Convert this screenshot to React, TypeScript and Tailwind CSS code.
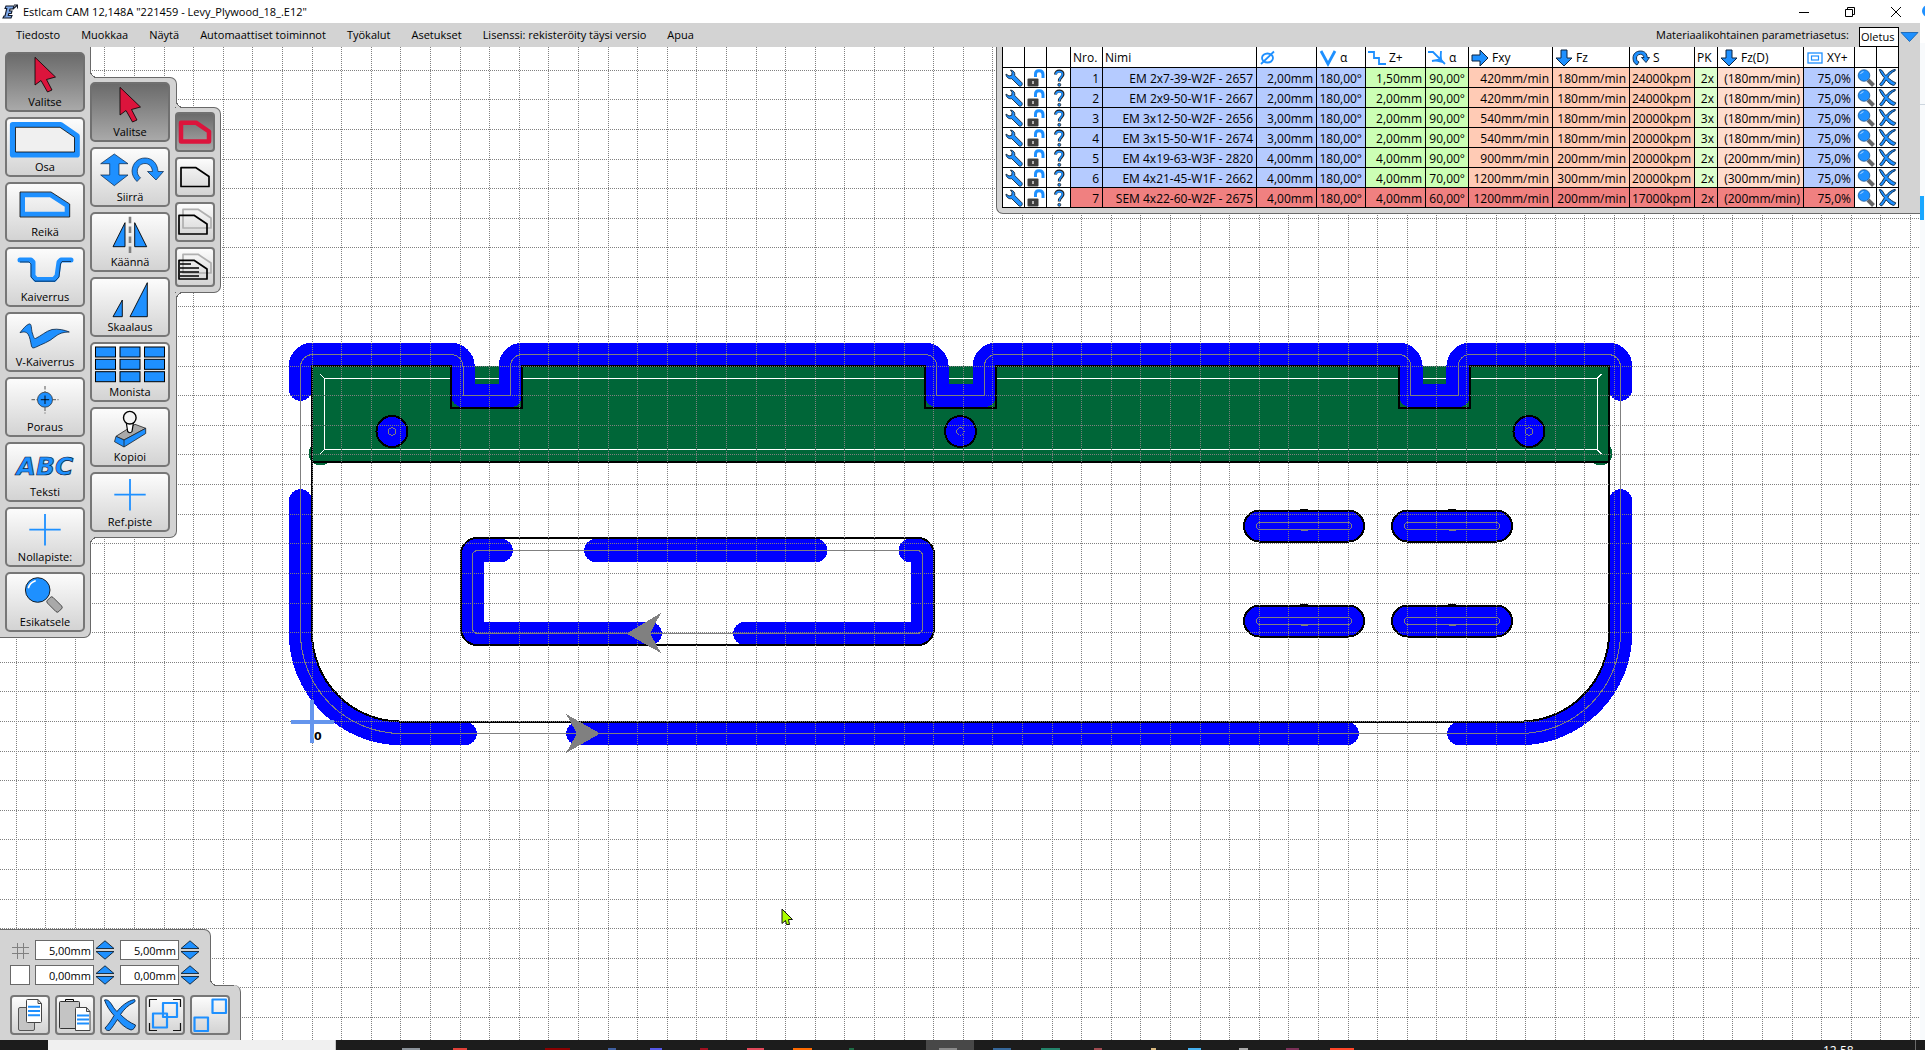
import { useState, type ReactNode } from "react";

const BLUE = "#1e90ff";
const RED = "#dc143c";

// world origin of the drawing and grid pitch (5 mm), in page pixels
const ORIGIN_X = 312;
const ORIGIN_Y = 721.4;
const PITCH = 29.6;
const HEADER = 47;

const menuItems = [
  "Tiedosto",
  "Muokkaa",
  "Näytä",
  "Automaattiset toiminnot",
  "Työkalut",
  "Asetukset",
  "Lisenssi: rekisteröity täysi versio",
  "Apua",
];

type Tool = {
  nro: number;
  nimi: string;
  d: string;
  angle: string;
  z: string;
  plunge: string;
  fxy: string;
  fz: string;
  s: string;
  pk: string;
  fzd: string;
  xy: string;
};

const tools: Tool[] = [
  { nro: 1, nimi: "EM 2x7-39-W2F - 2657", d: "2,00mm", angle: "180,00°", z: "1,50mm", plunge: "90,00°", fxy: "420mm/min", fz: "180mm/min", s: "24000kpm", pk: "2x", fzd: "(180mm/min)", xy: "75,0%" },
  { nro: 2, nimi: "EM 2x9-50-W1F - 2667", d: "2,00mm", angle: "180,00°", z: "2,00mm", plunge: "90,00°", fxy: "420mm/min", fz: "180mm/min", s: "24000kpm", pk: "2x", fzd: "(180mm/min)", xy: "75,0%" },
  { nro: 3, nimi: "EM 3x12-50-W2F - 2656", d: "3,00mm", angle: "180,00°", z: "2,00mm", plunge: "90,00°", fxy: "540mm/min", fz: "180mm/min", s: "20000kpm", pk: "3x", fzd: "(180mm/min)", xy: "75,0%" },
  { nro: 4, nimi: "EM 3x15-50-W1F - 2674", d: "3,00mm", angle: "180,00°", z: "2,00mm", plunge: "90,00°", fxy: "540mm/min", fz: "180mm/min", s: "20000kpm", pk: "3x", fzd: "(180mm/min)", xy: "75,0%" },
  { nro: 5, nimi: "EM 4x19-63-W3F - 2820", d: "4,00mm", angle: "180,00°", z: "4,00mm", plunge: "90,00°", fxy: "900mm/min", fz: "200mm/min", s: "20000kpm", pk: "2x", fzd: "(200mm/min)", xy: "75,0%" },
  { nro: 6, nimi: "EM 4x21-45-W1F - 2662", d: "4,00mm", angle: "180,00°", z: "4,00mm", plunge: "70,00°", fxy: "1200mm/min", fz: "300mm/min", s: "20000kpm", pk: "2x", fzd: "(300mm/min)", xy: "75,0%" },
  { nro: 7, nimi: "SEM 4x22-60-W2F - 2675", d: "4,00mm", angle: "180,00°", z: "4,00mm", plunge: "60,00°", fxy: "1200mm/min", fz: "200mm/min", s: "17000kpm", pk: "2x", fzd: "(200mm/min)", xy: "75,0%" },
];

/* ---------- toolbar icons (76 x 41) ---------- */

const PointerIcon = () => (
  <path d="M28 3.3V31L34 26.5L40.5 38L45 36L39.5 25.5L48.5 23Z" fill={RED} stroke="#000" strokeWidth="0.8" />
);

const PlusIcon = () => (
  <path d="M38 5V36.5M22.3 20.7H53.7" stroke={BLUE} strokeWidth="1.8" fill="none" />
);

const OsaIcon = () => (
  <>
    <path d="M5.7 5.7H53.7L70 17V35.7H5.7Z" fill="none" stroke={BLUE} strokeWidth="5.6" strokeLinejoin="round" />
    <path d="M8.5 8.3H53L67.5 18.3V33H8.5Z" fill="#f0f0f0" stroke="#000" strokeWidth="0.8" />
  </>
);

const ReikaIcon = () => (
  <>
    <path d="M15.5 10.7H43.5L60.2 21.5V30.3H15.5Z" fill="none" stroke={BLUE} strokeWidth="5" />
    <path d="M13 8H44L62.7 20V33H13Z" fill="none" stroke="#000" strokeWidth="0.8" />
  </>
);

const KaiverrusIcon = () => (
  <>
    <path d="M13 11H24L26 13V27L29 30.5H47L50 27L52 13L54 11H64" fill="none" stroke={BLUE} strokeWidth="5" strokeLinecap="round" strokeLinejoin="round" />
    <path d="M13 13H22L24 15V28L28 32.2H48L52 28L53.5 15L55 12.5H64" fill="none" stroke="#0a2340" strokeWidth="0.8" />
  </>
);

const VKaiverrusIcon = () => (
  <path d="M13 18.7C16 15 19 11 22 10C25 9 24 15 25.3 19C26.500 22.500 27 25 28.500 24.500C34 22 39 17 45 15.500C51 14.500 58 16 62.300 18C56 18 52 19.500 48 22.700C42 28 35 30 28.500 33.300C26 34.500 25 34 24.500 32C23.500 28 23 23 21 20C19 17.500 16 17.700 13 18.700Z" fill={BLUE} stroke="#0a2340" strokeWidth="0.8" />
);

const PorausIcon = () => (
  <>
    <circle cx="38" cy="20.700" r="7.500" fill={BLUE} stroke="#333" strokeWidth="0.8" />
    <path d="M38 16.500V25M33.800 20.700H42.200" stroke="#000" strokeWidth="0.9" />
    <path d="M38 7V13M38 28.500V34.500M24.500 20.700H30.500M45.500 20.700H51.500" stroke="#444" strokeWidth="0.9" strokeDasharray="3.500 1.500" />
  </>
);

const TekstiIcon = () => (
  <text x="38" y="31" textAnchor="middle" fontFamily="DejaVu Sans, sans-serif" fontSize="25" fontWeight="bold" fontStyle="italic" fill={BLUE} stroke="#0a2340" strokeWidth="0.7">
    ABC
  </text>
);

const EsikatseleIcon = () => (
  <>
    <rect x="39.500" y="26.500" width="16" height="8" rx="2" transform="rotate(45 47.500 30.500)" fill="#a9a9a9" stroke="#333" strokeWidth="0.8" />
    <circle cx="30.700" cy="16" r="12.300" fill={BLUE} stroke="#111" strokeWidth="0.9" />
    <path d="M21.500 13.500C22.500 10 25 8 28 7" fill="none" stroke="#fff" strokeWidth="1.800" strokeLinecap="round" />
  </>
);

const SiirraIcon = () => (
  <>
    <path d="M22.300 5L36 14.700H27V26H36L22.300 36.700L8.700 26H17.700V14.700H8.700Z" fill={BLUE} stroke="#0a2340" strokeWidth="0.7" />
    <path d="M45 32.500C42 29.500 40 26 40 22C40.500 14 46 9 53 9C60 9 65.500 14 66 22.500H71.500L64 31L55.500 22.500H60.500C60 17.500 57 14.500 53 14.500C48.500 14.500 45.300 18 45.300 22.500C45.300 25 46.500 27 48.500 28.800Z" fill={BLUE} stroke="#0a2340" strokeWidth="0.7" />
  </>
);

const KaannaIcon = () => (
  <>
    <path d="M33 8.700V32.700H21ZM42.700 8.700V32.700H54.700Z" fill={BLUE} stroke="#000" strokeWidth="0.9" />
    <path d="M38 2.700V39" stroke="#808080" strokeWidth="2.600" strokeDasharray="6.500 3.400" />
  </>
);

const SkaalausIcon = () => (
  <path d="M30.300 21V37.700H21ZM55.300 3.700V37.700H38Z" fill={BLUE} stroke="#000" strokeWidth="0.9" />
);

const MonistaIcon = () => (
  <>
    {[3.5, 28, 52.5].map((x) =>
      [3, 15.3, 27.7].map((y) => (
        <rect key={`${x}-${y}`} x={x} y={y} width="20" height="10" fill={BLUE} stroke="#000" strokeWidth="1" />
      )),
    )}
  </>
);

const KopioiIcon = () => (
  <>
    <path d="M24 27.300L43 15.300L53.700 19.300L32 31Z" fill="#a9a9a9" stroke="#222" strokeWidth="0.8" />
    <path d="M24 27.300L32 31L53.700 19.300V24.500L32 38L22.500 32.700Z" fill={BLUE} stroke="#222" strokeWidth="0.8" />
    <path d="M32 31V38" stroke="#222" strokeWidth="0.8" />
    <path d="M34 12L35.700 22.500Q38 25 40 22.500L41.700 12Z" fill="#fff" stroke="#000" strokeWidth="1.200" />
    <circle cx="37.800" cy="8.700" r="6.300" fill="#f4f4f4" stroke="#000" strokeWidth="1.400" />
  </>
);

const mainTools: { label: string; icon: ReactNode }[] = [
  { label: "Valitse", icon: <PointerIcon /> },
  { label: "Osa", icon: <OsaIcon /> },
  { label: "Reikä", icon: <ReikaIcon /> },
  { label: "Kaiverrus", icon: <KaiverrusIcon /> },
  { label: "V-Kaiverrus", icon: <VKaiverrusIcon /> },
  { label: "Poraus", icon: <PorausIcon /> },
  { label: "Teksti", icon: <TekstiIcon /> },
  { label: "Nollapiste:", icon: <PlusIcon /> },
  { label: "Esikatsele", icon: <EsikatseleIcon /> },
];

const editTools: { label: string; icon: ReactNode }[] = [
  { label: "Valitse", icon: <PointerIcon /> },
  { label: "Siirrä", icon: <SiirraIcon /> },
  { label: "Käännä", icon: <KaannaIcon /> },
  { label: "Skaalaus", icon: <SkaalausIcon /> },
  { label: "Monista", icon: <MonistaIcon /> },
  { label: "Kopioi", icon: <KopioiIcon /> },
  { label: "Ref.piste", icon: <PlusIcon /> },
];

/* ---------- small icons (36 x 36) ---------- */

const SHAPE = "M4 8.700H19L32 17.500V27.500H4Z";
const FRONT = "M2 11.300H17L30 20V30H2Z";

const selectModes: { label: string; icon: ReactNode }[] = [
  { label: "Koko muoto", icon: <path d={SHAPE} stroke={RED} strokeWidth="4.500" /> },
  { label: "Ääriviiva", icon: <path d={SHAPE} stroke="#000" strokeWidth="1.700" /> },
  {
    label: "Päällekkäiset",
    icon: (
      <>
        <path d={FRONT} transform="translate(4 -6)" stroke="#b0b0b0" strokeWidth="1.700" />
        <path d={FRONT} stroke="#000" strokeWidth="1.700" />
      </>
    ),
  },
  {
    label: "Täytetyt",
    icon: (
      <>
        <path d={FRONT} transform="translate(4 -6)" stroke="#b0b0b0" strokeWidth="1.700" />
        <path d={FRONT} stroke="#000" strokeWidth="1.700" />
        <path d="M3 15H14M3 19H22M3 23H22M3 27H22" stroke="#000" strokeWidth="1.600" />
      </>
    ),
  },
];

const CROSS =
  "M2.500 3C6 2 8 5 10 8C12 11.500 13.500 13 15 14.500C19 9.500 25 4 32.500 2.500C33.500 3.500 33 5 32 5.500C26 8 22 12.500 18.500 17.500C23 22 27.500 25.500 33.500 28C33 31 31.500 32.500 29 33C23 31 18.500 26.500 15.500 22.500C12.500 27 10 31 7.500 33.500C5 34 3.500 32.500 3 31C6.500 27.500 9.500 23 12 18.500C8 14 4.500 9 2.500 3Z";

const bottomTools: { label: string; icon: ReactNode }[] = [
  {
    label: "Kopioi leikepöydälle",
    icon: (
      <>
        <rect x="6.500" y="10.500" width="16" height="23" rx="1.500" fill="#c4c4c4" stroke="#555" />
        <path d="M14.500 3.500Q14.500 2.500 15.500 2.500H26L29.500 6.500V24.500Q29.500 25.500 28.500 25.500H15.500Q14.500 25.500 14.500 24.500ZM26 2.500V6.500H29.500" fill="#fff" stroke="#444" />
        <path d="M16 9.700H28M16 14H28M16 18.300H28" stroke={BLUE} strokeWidth="2" />
      </>
    ),
  },
  {
    label: "Liitä",
    icon: (
      <>
        <rect x="2.500" y="4.500" width="20" height="27" rx="1" fill="#c4c4c4" stroke="#333" />
        <path d="M8.500 4V2.500H16.500V4" fill="#eee" stroke="#000" />
        <path d="M18.500 11.500Q18.500 10.500 19.500 10.500H29.500L33 14.500V33.500H18.500ZM29.500 10.500V14.500H33" fill="#fff" stroke="#444" />
        <path d="M20 18.500H32M20 22.500H32M20 26.500H32" stroke={BLUE} strokeWidth="2" />
      </>
    ),
  },
  {
    label: "Poista",
    icon: <path d={CROSS} fill={BLUE} stroke="#0a2340" strokeWidth="0.9" />,
  },
  {
    label: "Ryhmitä",
    icon: (
      <>
        <path d="M2.500 10V2.500H10M26 2.500H33.500V10M33.500 26V33.500H26M10 33.500H2.500V26" stroke="#111" strokeWidth="1.200" />
        <rect x="6" y="16.500" width="14" height="14" stroke={BLUE} strokeWidth="2.200" />
        <rect x="16" y="6" width="14" height="14" stroke={BLUE} strokeWidth="2.200" />
      </>
    ),
  },
  {
    label: "Pura ryhmä",
    icon: (
      <>
        <rect x="2.500" y="20.500" width="13.500" height="13.500" stroke={BLUE} strokeWidth="2.200" />
        <rect x="20.500" y="2.500" width="13.500" height="13.500" stroke={BLUE} strokeWidth="2.200" />
      </>
    ),
  },
];

/* ---------- buttons ---------- */

function ToolButton({ label, icon, active, onClick }: { label: string; icon: ReactNode; active: boolean; onClick: () => void }) {
  return (
    <button
      type="button"
      onClick={onClick}
      className={`flex h-[60px] w-20 flex-col items-center rounded-[5px] border-2 bg-linear-to-b ${
        active ? "border-[#707070] from-[#6b6b6b] to-[#a9a9a9]" : "border-[#777777] from-[#fcfcfc] to-[#d3d3d3]"
      }`}
    >
      <svg viewBox="0 0 76 41" className="h-[41px] w-[76px] shrink-0">{icon}</svg>
      <span className="text-[11px] leading-[14px]">{label}</span>
    </button>
  );
}

function IconButton({ label, icon, active = false, onClick }: { label: string; icon: ReactNode; active?: boolean; onClick?: () => void }) {
  return (
    <button
      type="button"
      aria-label={label}
      onClick={onClick}
      className={`size-10 rounded-[4px] border-2 bg-linear-to-b ${
        active ? "border-[#707070] from-[#6b6b6b] to-[#a9a9a9]" : "border-[#777777] from-[#fcfcfc] to-[#d3d3d3]"
      }`}
    >
      <svg viewBox="0 0 36 36" className="size-9" fill="none" strokeLinejoin="round">{icon}</svg>
    </button>
  );
}

function LengthField({ label, initial }: { label: string; initial: string }) {
  const [value, setValue] = useState(initial);
  const step = (delta: number) =>
    setValue((v) => `${Math.max(0, parseFloat(v.replace(",", ".")) + delta).toFixed(2).replace(".", ",")}mm`);

  return (
    <div className="flex items-center gap-px">
      <input
        aria-label={label}
        value={value}
        onChange={(e) => setValue(e.target.value)}
        className="h-5 w-[59px] border border-[#696969] bg-white pr-[2px] text-right text-[11px] leading-[18px]"
      />
      <div className="flex flex-col">
        <button type="button" aria-label={`${label} +`} onClick={() => step(1)}>
          <svg viewBox="0 0 20 10" className="h-[10px] w-5">
            <path d="M1 8.500L10 0.800L19 8.500Z" fill={BLUE} stroke="#123" strokeWidth="0.9" />
          </svg>
        </button>
        <button type="button" aria-label={`${label} -`} onClick={() => step(-1)}>
          <svg viewBox="0 0 20 10" className="h-[10px] w-5">
            <path d="M1 1.500L10 9.200L19 1.500Z" fill={BLUE} stroke="#123" strokeWidth="0.9" />
          </svg>
        </button>
      </div>
    </div>
  );
}

/* ---------- drawing ---------- */

const notches = [486.7, 960.6, 1434.5];
const holes = [392, 960.5, 1529];

const outline = [
  "M312 632.600V366",
  ...notches.map((c) => `H${c - 35.5}V408H${c + 35.5}V366`),
  "H1609V632.600A89 89 0 0 1 1520 721.600H401A89 89 0 0 1 312 632.600Z",
].join("");

const topPath = [
  "M300.500 389V366A12 12 0 0 1 312 354.500",
  ...notches.map(
    (c) => `H${c - 35.5}A12 12 0 0 1 ${c - 23.7} 366V395.500H${c + 23.7}V366A12 12 0 0 1 ${c + 35.5} 354.500`,
  ),
  "H1609A12 12 0 0 1 1620.500 366V389",
].join("");

const cuts = [
  topPath,
  "M300.500 501V632.600A101 101 0 0 0 401 733.500H465",
  "M578 733.500H1347",
  "M1459 733.500H1520A101 101 0 0 0 1620.500 632.600V501",
  "M650 633.500H477.500A5 5 0 0 1 472.500 628.500V555.500A5 5 0 0 1 477.500 550.500H501",
  "M596 550.500H815.500",
  "M910.500 550.500H917.500A5 5 0 0 1 922.500 555.500V628.500A5 5 0 0 1 917.500 633.500H745",
];

const slots = [
  [1244, 510.5],
  [1392, 510.5],
  [1244, 605.5],
  [1392, 605.5],
];

function Grid() {
  const lines: ReactNode[] = [];
  for (let k = -10; k <= 70; k++) {
    const x = Math.floor(ORIGIN_X + k * PITCH) + 0.5;
    lines.push(<line key={`v${k}`} x1={x} y1={HEADER} x2={x} y2="2000" />);
  }
  for (let k = -22; k <= 20; k++) {
    const y = Math.floor(ORIGIN_Y + k * PITCH) + 0.5;
    lines.push(<line key={`h${k}`} x1="0" y1={y} x2="4000" y2={y} />);
  }
  return (
    <g stroke="#808080" strokeWidth="1" strokeDasharray="1 1" shapeRendering="crispEdges">
      {lines}
    </g>
  );
}

function Drawing() {
  return (
    <svg className="absolute inset-0 h-full w-full bg-white" role="img" aria-label="Levy_Plywood_18_.E12">
      <g transform={`translate(0 ${-HEADER})`} fill="none" shapeRendering="crispEdges">
        {/* pocketed strip */}
        <g fill="#006638">
          <rect x="312" y="366" width="1297" height="96" />
          <circle cx="320.500" cy="453.500" r="11.800" />
          <circle cx="1600.500" cy="453.500" r="11.800" />
        </g>
        <path d="M320 374L324.500 378.500H1597V449.500H324.500V378.500M324.500 449.500L320 454M1597 378.500L1601.500 374M1597 449.500L1601.500 454" stroke="#fff" />

        {/* cut width */}
        <g stroke="#0000ff" strokeWidth="23.500" strokeLinecap="round" strokeLinejoin="round">
          {cuts.map((d) => (
            <path key={d} d={d} />
          ))}
        </g>

        {/* part contours */}
        <g stroke="#000" strokeWidth="2">
          <path d={outline} />
          <path d="M312 462H1609" />
          <rect x="461" y="538" width="473" height="107" rx="16" />
          {holes.map((cx) => (
            <circle key={cx} cx={cx} cy="431.500" r="15.500" fill="#0000ff" />
          ))}
          {slots.map(([x, y]) => (
            <g key={`${x}-${y}`}>
              <rect x={x} y={y} width="120" height="31" rx="15.500" fill="#0000ff" />
              <path d={`M${x + 56} ${y - 0.5}h8M${x + 56} ${y + 31.5}h8`} />
            </g>
          ))}
        </g>

        {/* tool centre lines */}
        <g stroke="#808080" strokeWidth="1">
          <path d={topPath} />
          <path d="M300.500 389V632.600A101 101 0 0 0 401 733.500H1520A101 101 0 0 0 1620.500 632.600V389" />
          <rect x="472.500" y="550.500" width="450" height="83" rx="5" />
          {holes.map((cx) => (
            <circle key={cx} cx={cx} cy="431.500" r="3.700" />
          ))}
          {slots.map(([x, y]) => (
            <g key={`${x}-${y}`}>
              <rect x={x + 12.5} y={y + 12} width="95" height="7" rx="3.500" />
              <path d={`M${x + 57} ${y + 20}h7`} />
            </g>
          ))}
        </g>

        <Grid />

        <path d="M626.500 633.500L661 613L650 633.500L661 653Z" fill="#808080" />
        <path d="M600 733.500L566 714L577 733.500L566 753Z" fill="#808080" />

        {/* zero point */}
        <path d="M312 700V743M291 722H333.500" stroke="#6495ed" strokeWidth="4" />
        <text x="314" y="740" fontFamily="DejaVu Sans, sans-serif" fontSize="11" fontWeight="bold" fill="#000" stroke="#fff" strokeWidth="2" paintOrder="stroke">
          0
        </text>

        {/* mouse pointer */}
        <path d="M782 909V923.500L785.500 920.500L786.500 924.500H789.500L788.500 919.500H792.500Z" fill="#aaff00" stroke="#111" shapeRendering="auto" />
      </g>
    </svg>
  );
}

/* ---------- tool table ---------- */

const ArrowDown = () => (
  <svg viewBox="0 0 18 18" className="size-[18px]">
    <path d="M6 1H12V9H17L9 17L1 9H6Z" fill={BLUE} stroke="#0a2340" />
  </svg>
);

const columns: { label: string; width: string; name?: string; icon?: ReactNode }[] = [
  { label: "", name: "Muokkaa", width: "w-[22px]" },
  { label: "", name: "Lukitse", width: "w-[22px]" },
  { label: "", name: "Ohje", width: "w-[24px]" },
  { label: "Nro.", width: "w-[32px]" },
  { label: "Nimi", width: "w-[154px]" },
  {
    label: "",
    name: "Halkaisija",
    width: "w-[60px]",
    icon: (
      <svg viewBox="0 0 18 18" className="size-[18px]" fill="none" stroke={BLUE} strokeWidth="1.800">
        <ellipse cx="8.500" cy="9" rx="5.500" ry="4.500" />
        <path d="M2 15L15 2.500" />
      </svg>
    ),
  },
  {
    label: "α",
    width: "w-[49px]",
    icon: (
      <svg viewBox="0 0 18 18" className="size-[18px]" fill="none" stroke={BLUE} strokeWidth="2.800">
        <path d="M2 2L9 15L16 2" />
      </svg>
    ),
  },
  {
    label: "Z+",
    width: "w-[60px]",
    icon: (
      <svg viewBox="0 0 18 18" className="size-[18px]" fill="none" stroke={BLUE} strokeWidth="1.800">
        <path d="M0 3H6V9H11V15H18" />
      </svg>
    ),
  },
  {
    label: "α",
    width: "w-[43px]",
    icon: (
      <svg viewBox="0 0 18 18" className="size-[18px]" fill="none" stroke={BLUE} strokeWidth="1.800">
        <path d="M0 3H5L17 15M13 2L12.500 10.500L4 12" />
        <path d="M13 6L15 14L6 12L11 10Z" fill={BLUE} stroke="none" />
      </svg>
    ),
  },
  {
    label: "Fxy",
    width: "w-[84px]",
    icon: (
      <svg viewBox="0 0 18 18" className="size-[18px]">
        <path d="M1 6H9V1L17 9L9 17V12H1Z" fill={BLUE} stroke="#0a2340" />
      </svg>
    ),
  },
  { label: "Fz", width: "w-[77px]", icon: <ArrowDown /> },
  {
    label: "S",
    width: "w-[65px]",
    icon: (
      <svg viewBox="0 0 18 18" className="size-[18px]">
        <path d="M5 16C2 14.500 1 12 1 9C1 4.500 4.500 2 8.500 2C13 2 15 5 15.300 8.500H17.500L14 13.500L9.500 8.500H12C11.500 6.500 10.500 5.300 8.500 5.300C6 5.300 4.500 7 4.500 9C4.500 11 5.300 12.300 7 13Z" fill={BLUE} stroke="#0a2340" strokeWidth="0.9" />
      </svg>
    ),
  },
  { label: "PK", width: "w-[23px]" },
  { label: "Fz(D)", width: "w-[86px]", icon: <ArrowDown /> },
  {
    label: "XY+",
    width: "w-[51px]",
    icon: (
      <svg viewBox="0 0 18 18" className="size-[18px]" fill="none" stroke={BLUE}>
        <rect x="2" y="4" width="14" height="10" strokeWidth="1.300" />
        <rect x="5.500" y="7" width="7" height="4" strokeWidth="1.200" />
      </svg>
    ),
  },
  { label: "", name: "Näytä", width: "w-[22px]" },
  { label: "", name: "Poista", width: "w-[22px]" },
];

const WrenchIcon = () => (
  <svg viewBox="0 0 18 18" className="mx-auto size-[18px]">
    <path d="M5.500 1C8.800 1.300 10.300 4 9.700 6.500L17 13.800C18 16 16 18 14 17L6.700 9.700C3.500 10.300 1 8 1 5L4 7L6.700 6.300L7 3.500Z" fill={BLUE} stroke="#1b2a3a" strokeWidth="0.900" />
  </svg>
);

const LockIcon = () => (
  <svg viewBox="0 0 20 18" className="mx-auto h-[18px] w-5">
    <path d="M9.500 8V5C9.500 2.500 11 1.700 13 1.700C15.500 1.700 17 3 17 5.500V9" fill="none" stroke={BLUE} strokeWidth="3" />
    <rect x="1.500" y="9.500" width="11" height="8" rx="1" fill="#3c3c3c" />
    <path d="M7 12V15" stroke="#ddd" strokeWidth="1.500" />
  </svg>
);

const HelpIcon = () => (
  <svg viewBox="0 0 18 18" className="mx-auto size-[18px]" fill="none">
    <path d="M5.500 5.500C5.500 0.800 13 0.800 13 5.300C13 8.500 9.300 8 9.300 12.500" stroke="#222" strokeWidth="3" />
    <path d="M5.800 5.500C6 1.700 12.500 1.500 12.500 5.300C12.500 8 9.300 8 9.300 12" stroke={BLUE} strokeWidth="1.700" />
    <circle cx="9.300" cy="15.800" r="1.500" fill={BLUE} stroke="#222" strokeWidth="0.800" />
  </svg>
);

const LensIcon = () => (
  <svg viewBox="0 0 18 18" className="mx-auto size-[18px]">
    <path d="M11 11L16.500 16.500" stroke="#666" strokeWidth="4" />
    <circle cx="7" cy="6.500" r="5.800" fill={BLUE} stroke="#0d4a8a" strokeWidth="0.700" />
    <path d="M3.500 5Q4.500 3 6.500 2.700" fill="none" stroke="#bfe0ff" />
  </svg>
);

const CrossIcon = () => (
  <svg viewBox="0 0 36 36" className="mx-auto size-[19px]">
    <path d={CROSS} fill={BLUE} stroke="#0a2340" strokeWidth="1.800" />
  </svg>
);

function IconCell({ label, children }: { label: string; children: ReactNode }) {
  return (
    <td className="border-r border-b border-black bg-white p-0">
      <button type="button" aria-label={label} className="block w-full">{children}</button>
    </td>
  );
}

function ToolRow({ tool }: { tool: Tool }) {
  const last = tool.nro === 7;
  const cell = "border-r border-b border-black p-0 pt-[2px] pr-[3px] text-right whitespace-nowrap";
  const blue = `${cell} ${last ? "bg-[#f08080]" : "bg-[#b5cbff]"}`;
  const green = `${cell} ${last ? "bg-[#f08080]" : "bg-[#ccffb5]"}`;
  const orange = `${cell} ${last ? "bg-[#f08080]" : "bg-[#ffcbb5]"}`;

  return (
    <tr className="h-5 leading-[17px]">
      <IconCell label={`Muokkaa ${tool.nro}`}><WrenchIcon /></IconCell>
      <IconCell label={`Lukitse ${tool.nro}`}><LockIcon /></IconCell>
      <IconCell label={`Ohje ${tool.nro}`}><HelpIcon /></IconCell>
      <td className={blue}>{tool.nro}</td>
      <td className={blue}>{tool.nimi}</td>
      <td className={blue}>{tool.d}</td>
      <td className={blue}>{tool.angle}</td>
      <td className={green}>{tool.z}</td>
      <td className={green}>{tool.plunge}</td>
      <td className={orange}>{tool.fxy}</td>
      <td className={orange}>{tool.fz}</td>
      <td className={orange}>{tool.s}</td>
      <td className={`${cell} ${last ? "bg-[#f08080]" : "bg-[#ddffcd]"}`}>{tool.pk}</td>
      <td className={`${cell} ${last ? "bg-[#f08080]" : "bg-[#ffdccd]"}`}>{tool.fzd}</td>
      <td className={blue}>{tool.xy}</td>
      <IconCell label={`Näytä ${tool.nro}`}><LensIcon /></IconCell>
      <IconCell label={`Poista ${tool.nro}`}><CrossIcon /></IconCell>
    </tr>
  );
}

function ToolTable() {
  return (
    <div className="absolute top-0 right-0 rounded-bl-[7px] border-b border-l border-[#696969] bg-[#d3d3d3] pr-[21px] pb-[5px] pl-[5px]">
      <table className="w-[897px] table-fixed border-separate border-spacing-0 border-l border-black bg-white text-[12px]">
        <thead>
          <tr className="h-[21px] leading-[18px]">
            {columns.map((c, i) => (
              <th key={i} aria-label={c.name} className={`border-r border-b border-black p-0 text-left font-normal whitespace-nowrap ${c.width}`}>
                <span className="flex h-5 items-center gap-[3px] pt-[2px] pl-[2px]">
                  {c.icon}
                  {c.label}
                </span>
              </th>
            ))}
          </tr>
        </thead>
        <tbody>
          {tools.map((t) => (
            <ToolRow key={t.nro} tool={t} />
          ))}
        </tbody>
      </table>
    </div>
  );
}

/* ---------- panels ---------- */

const panel = "border-[#696969] bg-[#d3d3d3]";
const filletUp = "absolute size-[7px] bg-[radial-gradient(circle_at_top_right,transparent_6px,#696969_6px,#696969_7px,#d3d3d3_7px)]";
const filletDown = "absolute size-[7px] bg-[radial-gradient(circle_at_bottom_right,transparent_6px,#696969_6px,#696969_7px,#d3d3d3_7px)]";

function LeftPanels() {
  const [main, setMain] = useState(0);
  const [edit, setEdit] = useState(0);
  const [mode, setMode] = useState(0);

  return (
    <div className="absolute top-0 left-0 flex items-start">
      <div className={`flex flex-col gap-[5px] rounded-br-[7px] border-r border-b p-[5px] ${panel}`}>
        {mainTools.map((t, i) => (
          <ToolButton key={t.label} {...t} active={main === i} onClick={() => setMain(i)} />
        ))}
      </div>
      <div className={`relative mt-[30px] -ml-px flex flex-col gap-[5px] rounded-r-[7px] border-y border-r pt-1 pr-[6px] pb-[5px] ${panel}`}>
        <span className={`${filletUp} -top-[7px] left-0`} />
        <span className={`${filletDown} -bottom-[7px] left-0`} />
        {editTools.map((t, i) => (
          <ToolButton key={t.label} {...t} active={edit === i} onClick={() => setEdit(i)} />
        ))}
      </div>
      <div className={`relative mt-[60px] -ml-[2px] flex flex-col gap-[5px] rounded-r-[7px] border-y border-r pt-1 pr-[5px] pb-[5px] ${panel}`}>
        <span className={`${filletUp} -top-[7px] left-px`} />
        <span className={`${filletDown} -bottom-[7px] left-px`} />
        {selectModes.map((t, i) => (
          <IconButton key={t.label} {...t} active={mode === i} onClick={() => setMode(i)} />
        ))}
      </div>
    </div>
  );
}

function BottomPanel() {
  return (
    <div className="absolute bottom-0 left-0 flex flex-col items-start">
      <div className={`flex flex-col gap-[5px] rounded-tr-[7px] border-t border-r pt-[10px] pr-[10px] pl-[10px] ${panel}`}>
        <div className="flex items-center gap-[5px]">
          <svg viewBox="0 0 20 20" className="size-5" fill="none" stroke="#808080">
            <path d="M7.500 3V19M13.500 3V19M2 7.500H19M2 13.500H19" />
          </svg>
          <LengthField label="Ruudukko X" initial="5,00mm" />
          <LengthField label="Ruudukko Y" initial="5,00mm" />
        </div>
        <div className="flex items-center gap-[5px]">
          <input type="checkbox" aria-label="Kohdistus" className="m-0 size-5 appearance-none border border-[#696969] bg-white checked:bg-[#1e90ff]" />
          <LengthField label="Siirtymä X" initial="0,00mm" />
          <LengthField label="Siirtymä Y" initial="0,00mm" />
        </div>
      </div>
      <div className={`relative flex gap-[5px] rounded-tr-[7px] border-r pt-[10px] pr-[10px] pb-[5px] pl-[10px] ${panel}`}>
        <span className={`${filletUp} -top-[6px] left-[210px]`} />
        <span className="absolute top-0 right-[6px] left-[217px] h-px bg-[#696969]" />
        {bottomTools.map((t) => (
          <IconButton key={t.label} {...t} />
        ))}
      </div>
    </div>
  );
}

/* ---------- window chrome ---------- */

function TitleBar() {
  return (
    <header className="flex h-[23px] items-center justify-between bg-white pr-px pl-[2px]">
      <div className="flex items-center gap-[5px]">
        <svg viewBox="0 0 16 16" className="size-4">
          <path d="M4 2H12L11 5H8L7.500 7H10L9.300 9.500H6.800L6.300 11.500H10L9 14H1L2 12H3L4.800 4.500H3Z" fill="#7da7e8" stroke="#101828" strokeWidth="1.100" />
          <path d="M11 5L15 1.500M12 1H15.500V4.500" fill="none" stroke="#101828" strokeWidth="1.100" />
        </svg>
        <h1 className="text-[11px] leading-4">Estlcam CAM 12,148A "221459 - Levy_Plywood_18_.E12"</h1>
      </div>
      <div className="flex items-center">
        <button type="button" aria-label="Pienennä" className="flex h-[22px] w-[46px] items-center justify-center">
          <svg viewBox="0 0 12 12" className="size-3" stroke="#000"><path d="M1 6.500H11" /></svg>
        </button>
        <button type="button" aria-label="Palauta" className="flex h-[22px] w-[46px] items-center justify-center">
          <svg viewBox="0 0 12 12" className="size-3" fill="none" stroke="#000">
            <path d="M1.500 3.500H8.500V10.500H1.500ZM3.500 3.500V1.500H10.500V8.500H8.500" />
          </svg>
        </button>
        <button type="button" aria-label="Sulje" className="flex h-[22px] w-[46px] items-center justify-center">
          <svg viewBox="0 0 12 12" className="size-3" stroke="#000"><path d="M1 1L11 11M11 1L1 11" /></svg>
        </button>
      </div>
    </header>
  );
}

function MenuBar() {
  return (
    <div className="flex h-6 items-center justify-between bg-[#d3d3d3] pr-px pl-4 text-[11px] leading-6">
      <nav className="flex gap-[21px]">
        {menuItems.map((m) => (
          <button type="button" key={m} className="whitespace-nowrap">{m}</button>
        ))}
      </nav>
      <div className="flex items-center">
        <label htmlFor="material" className="pr-[10px] text-[11px]">Materiaalikohtainen parametriasetus:</label>
        <select id="material" className="mt-1 h-5 w-10 appearance-none border border-black bg-white pl-px text-[11px] leading-[18px]">
          <option>Oletus</option>
        </select>
        <svg viewBox="0 0 20 12" className="mt-1 h-3 w-5">
          <path d="M2 1.500H19L10.500 10.500Z" fill={BLUE} stroke="#0d5cab" strokeWidth="0.800" />
        </svg>
      </div>
    </div>
  );
}

// tops of the pinned app icons peeking over the screen edge
const taskIcons = [
  { x: 402, w: 18, c: "#8a929a" },
  { x: 453, w: 14, c: "#e04038" },
  { x: 545, w: 25, c: "#8b0000" },
  { x: 608, w: 8, c: "#3f5f9f" },
  { x: 650, w: 12, c: "#5558e8" },
  { x: 700, w: 8, c: "#a01020" },
  { x: 747, w: 17, c: "#e0485a" },
  { x: 793, w: 19, c: "#ff6a00" },
  { x: 849, w: 5, c: "#1f6b45" },
  { x: 939, w: 18, c: "#8a8a8a" },
  { x: 993, w: 18, c: "#35679a" },
  { x: 1041, w: 19, c: "#23836a" },
  { x: 1094, w: 8, c: "#a04a50" },
  { x: 1151, w: 5, c: "#d8b880" },
  { x: 1188, w: 13, c: "#45b0f0" },
  { x: 1239, w: 9, c: "#a8a8a8" },
  { x: 1286, w: 13, c: "#7a3058" },
  { x: 1330, w: 24, c: "#ff4528" },
];

function TaskBar() {
  return (
    <footer className="relative flex h-[10px] shrink-0 overflow-hidden bg-[#1c1c1c]">
      <div className="ml-12 w-[288px] border-r border-[#c8c8c8] bg-[#f0f0f0]" />
      <div className="ml-[590px] w-12 bg-[#484848]" />
      <svg className="absolute inset-0 h-full w-full">
        {taskIcons.map((t) => (
          <rect key={t.x} x={t.x} y="8" width={t.w} height="2" fill={t.c} />
        ))}
      </svg>
      <span className="ml-auto w-[92px] pt-[3px] text-[12px] leading-4 text-white">12.58</span>
      <span className="mr-[9px] w-px bg-[#6a6a6a]" />
    </footer>
  );
}

export default function App() {
  return (
    <div className="flex h-screen flex-col overflow-hidden bg-white font-['Open_Sans','Noto_Sans',sans-serif] text-black">
      <div className="flex min-h-0 flex-1">
        <main className="flex min-w-0 flex-1 flex-col">
          <TitleBar />
          <MenuBar />
          <div className="relative min-h-0 flex-1 overflow-hidden">
            <Drawing />
            <LeftPanels />
            <ToolTable />
            <BottomPanel />
          </div>
        </main>
        <aside className="flex w-[5px] flex-col overflow-hidden bg-[#f8fafc]">
          <div className="h-[43px] bg-white pt-[5px] pl-[2px]">
            <div className="size-3 rounded-full bg-[#1e90ff]" />
          </div>
          <div className="h-[62px] border-b border-[#cdd6df]" />
          <div className="mt-[91px] h-6 w-1 bg-[#1aa7ff]" />
        </aside>
      </div>
      <TaskBar />
    </div>
  );
}
